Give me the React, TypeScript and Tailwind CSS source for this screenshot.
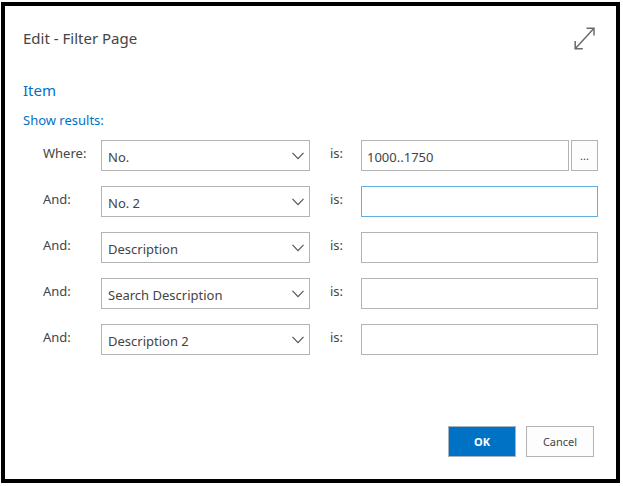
import React from "react";

type FilterRow = {
  id: string;
  label: string;
  field: string;
  value: string;
  lookup?: boolean;
  active?: boolean;
};

const rows: FilterRow[] = [
  { id: "no", label: "Where:", field: "No.", value: "1000..1750", lookup: true },
  { id: "no2", label: "And:", field: "No. 2", value: "", active: true },
  { id: "description", label: "And:", field: "Description", value: "" },
  { id: "search", label: "And:", field: "Search Description", value: "" },
  { id: "description2", label: "And:", field: "Description 2", value: "" },
];

const fields = rows.map((row) => row.field);

function ExpandIcon() {
  return (
    <svg width="22" height="24" viewBox="0 0 22 24" fill="none" stroke="#6b6b6b" strokeWidth="1.5">
      <path d="M1.2 22.7 L20 2.2" />
      <path d="M12.5 2.2 H20 V9.5" />
      <path d="M1.2 15 V22.7 H8.8" />
    </svg>
  );
}

function Chevron() {
  return (
    <svg
      className="pointer-events-none absolute right-1.5 top-3"
      width="12"
      height="8"
      viewBox="0 0 12 8"
      fill="none"
      stroke="#555555"
      strokeWidth="1.2"
    >
      <path d="M0.5 0.8 L6 6.6 L11.5 0.8" />
    </svg>
  );
}

function Row({ row }: { row: FilterRow }) {
  const border = row.active ? "border-[#62ade3]" : "border-[#b3b3b3]";
  return (
    <div className="grid grid-cols-[58px_209fr_51px_237fr]">
      <label htmlFor={`${row.id}-field`} className="pt-[3px] leading-5">
        {row.label}
      </label>
      <div className="relative">
        <select
          id={`${row.id}-field`}
          defaultValue={row.field}
          className="h-[31px] w-full appearance-none border border-[#b3b3b3] bg-white pl-1.5 pr-6 pt-1 outline-none"
        >
          {fields.map((field) => (
            <option key={field}>{field}</option>
          ))}
        </select>
        <Chevron />
      </div>
      <label htmlFor={`${row.id}-value`} className="pl-5 pt-[3px] leading-5">
        is:
      </label>
      <div className="flex gap-0.5">
        <input
          id={`${row.id}-value`}
          type="text"
          defaultValue={row.value}
          className={`h-[31px] w-full min-w-0 flex-1 border bg-white pl-[5px] pt-0.5 outline-none ${border}`}
        />
        {row.lookup && (
          <button
            type="button"
            aria-label="Look up value"
            className="h-[31px] w-[27px] border border-[#b3b3b3] bg-[#fdfdfd] pt-0.5 text-[11px]"
          >
            ...
          </button>
        )}
      </div>
    </div>
  );
}

export default function App() {
  return (
    <div className="min-h-screen bg-white pb-[3px] pl-px pr-[3px] pt-0.5 font-['Noto_Sans','Open_Sans',sans-serif] text-[13px] text-[#444444]">
      <main className="flex min-h-[calc(100vh-5px)] flex-col border-4 border-black px-[18px] pb-[22px] pt-5">
        <header className="flex items-start justify-between">
          <h1 className="text-[15px] leading-6">Edit - Filter Page</h1>
          <button type="button" aria-label="Expand" className="mr-0.5">
            <ExpandIcon />
          </button>
        </header>

        <h2 className="mt-7 text-[15px] leading-6 text-[#0072c6]">Item</h2>
        <p className="mt-2 leading-5 text-[#0072c6]">Show results:</p>

        <form className="mt-2.5 flex flex-col gap-[15px] pl-5">
          {rows.map((row) => (
            <Row key={row.id} row={row} />
          ))}
        </form>

        <footer className="mt-auto flex justify-end gap-2.5 pr-1 text-[11px]">
          <button type="button" className="h-[31px] w-[68px] border border-[#a6b4c0] bg-[#0072c6] pt-0.5 font-bold text-white">
            OK
          </button>
          <button type="button" className="h-[31px] w-[68px] border border-[#b3b3b3] bg-[#fdfdfd] pt-0.5">
            Cancel
          </button>
        </footer>
      </main>
    </div>
  );
}
